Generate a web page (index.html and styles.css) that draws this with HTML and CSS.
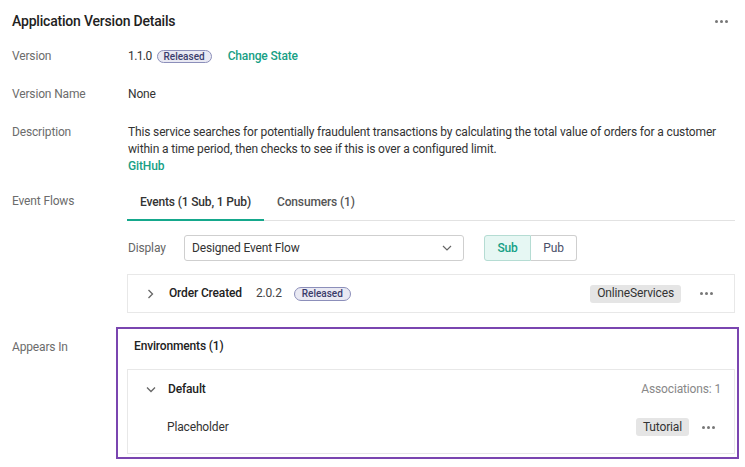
FILE: index.html
```html
<!DOCTYPE html>
<html>
<head>
<meta charset="utf-8">
<link rel="stylesheet" href="styles.css">
</head>
<body>
<div class="page">
  <header class="head">
    <h1 class="title">Application Version Details</h1>
    <span class="dots" aria-label="More"><i></i><i></i><i></i></span>
  </header>

  <div class="row">
    <div class="label">Version</div>
    <div class="value inline">
      <span class="ver">1.1.0</span>
      <span class="badge">Released</span>
      <a class="link change">Change State</a>
    </div>
  </div>

  <div class="row">
    <div class="label">Version Name</div>
    <div class="value">None</div>
  </div>

  <div class="row desc-row">
    <div class="label">Description</div>
    <div class="value">
      <p class="desc">This service searches for potentially fraudulent transactions by calculating the total value of orders for a customer within a time period, then checks to see if this is over a configured limit.</p>
      <a class="link">GitHub</a>
    </div>
  </div>

  <div class="row flows-row">
    <div class="label flows-label">Event Flows</div>
    <div class="value">
      <div class="tabs">
        <span class="tab active">Events (1 Sub, 1 Pub)</span>
        <span class="tab">Consumers (1)</span>
      </div>
      <div class="display">
        <span class="display-label">Display</span>
        <div class="select">
          <span>Designed Event Flow</span>
          <svg class="sel-chev" width="10" height="6" viewBox="0 0 10 6"><path d="M1 1l4 4 4-4" fill="none" stroke="#666" stroke-width="1.2"/></svg>
        </div>
        <div class="toggle">
          <span class="tg on">Sub</span>
          <span class="tg">Pub</span>
        </div>
      </div>
      <div class="card event">
        <svg class="chev" width="7" height="10" viewBox="0 0 7 10"><path d="M1.5 1l4 4-4 4" fill="none" stroke="#666" stroke-width="1.3"/></svg>
        <span class="ev-name">Order Created</span>
        <span class="ev-ver">2.0.2</span>
        <span class="badge">Released</span>
        <span class="spacer"></span>
        <span class="tag">OnlineServices</span>
        <span class="dots small"><i></i><i></i><i></i></span>
      </div>
    </div>
  </div>

  <div class="row appears-row">
    <div class="label appears-label">Appears In</div>
    <div class="highlight">
      <div class="env-title">Environments (1)</div>
      <div class="card env">
        <div class="env-head">
          <svg class="chev down" width="10" height="7" viewBox="0 0 10 7"><path d="M1 1.5l4 4 4-4" fill="none" stroke="#666" stroke-width="1.3"/></svg>
          <span class="env-name">Default</span>
          <span class="spacer"></span>
          <span class="assoc">Associations: 1</span>
        </div>
        <div class="env-item">
          <span>Placeholder</span>
          <span class="spacer"></span>
          <span class="tag">Tutorial</span>
          <span class="dots small"><i></i><i></i><i></i></span>
        </div>
      </div>
    </div>
  </div>
</div>
</body>
</html>
```
FILE: styles.css
```css
* { box-sizing: border-box; }
html, body { margin: 0; padding: 0; background: #fff; }
body {
  font-family: Roboto, "Liberation Sans", sans-serif;
  font-size: 12px;
  line-height: 17px;
  color: #333;
  letter-spacing: -0.15px;
}
.page { width: 745px; padding: 0 10px 0 12px; }

.head {
  display: flex;
  align-items: center;
  height: 48px;
  padding: 0 7px 6px 0;
}
.title {
  margin: 0;
  flex: 1;
  font-size: 14px;
  font-weight: 500;
  line-height: 20px;
  color: #222;
  letter-spacing: -0.2px;
}
.dots { display: inline-flex; gap: 2px; align-items: center; }
.dots i { width: 3px; height: 3px; border-radius: 50%; background: #777; display: block; }

.row {
  display: grid;
  grid-template-columns: 116px 1fr;
  margin-bottom: 21px;
}
.label { color: #6c6c6c; }
.value.inline { display: flex; align-items: center; }
.ver { letter-spacing: -0.6px; }
.value.inline .badge { margin-left: 5px; }
.badge {
  display: inline-flex;
  align-items: center;
  height: 13px;
  padding: 0 6px;
  border: 1px solid #8c8fba;
  border-radius: 7px;
  background: #e9e9f3;
  color: #3a3c6c;
  font-size: 10px;
  font-weight: 500;
  letter-spacing: 0;
  line-height: 11px;
}
.link { color: #17a085; font-weight: 500; cursor: pointer; }
.change { margin-left: 16px; }
.desc { margin: 0; }
.desc-row { margin-bottom: 9px; }

.flows-row { margin-bottom: 0; }
.flows-label { padding-top: 9px; }
.tabs {
  display: flex;
  height: 37px;
  border-bottom: 1px solid #e2e2e2;
  margin-left: -1px;
}
.tab {
  padding: 10px 13px 0;
  font-weight: 500;
  color: #555;
}
.tab.active { color: #333; border-bottom: 2px solid #15a88c; margin-bottom: -1px; }

.display {
  display: flex;
  align-items: center;
  margin-top: 14px;
  height: 26px;
}
.display-label { width: 56px; color: #666; }
.select {
  width: 280px;
  height: 26px;
  border: 1px solid #cfcfcf;
  border-radius: 3px;
  display: flex;
  align-items: center;
  padding: 0 11px 0 7px;
}
.select span { flex: 1; }
.toggle {
  display: flex;
  margin-left: 20px;
  height: 26px;
}
.tg {
  display: flex;
  align-items: center;
  justify-content: center;
  border: 1px solid #cfcfcf;
  color: #4a4f6a;
}
.tg.on {
  width: 47px;
  background: #e6f7f3;
  border-color: #b5dcd3;
  color: #14a085;
  font-weight: 500;
  border-radius: 3px 0 0 3px;
}
.tg:last-child { width: 46px; border-left: none; border-radius: 0 3px 3px 0; }

.card { border: 1px solid #e8e8e8; }
.event {
  margin: 13px 0 0 -1px;
  height: 39px;
  display: flex;
  align-items: center;
  padding: 0 21px 0 19px;
}
.chev { display: block; flex: none; }
.event .chev { margin-right: 15px; }
.ev-name { font-weight: 500; color: #222; }
.ev-ver { margin-left: 14px; color: #444; }
.event .badge { margin-left: 12px; padding: 0 7px; height: 14px; }
.spacer { flex: 1; }
.tag {
  display: inline-flex;
  align-items: center;
  height: 18px;
  padding: 0 7px;
  background: #e5e5e5;
  border-radius: 3px;
  color: #333;
}
.event .tag { margin-right: 19px; }

.appears-row { margin: 14px 0 0; }
.appears-label { padding-top: 11.5px; }
.highlight {
  margin-left: -12px;
  margin-right: -4px;
  border: 2px solid #7a45b0;
  padding: 9px 2px 3px 9px;
}
.env-title { font-weight: 500; color: #222; padding-left: 7px; height: 31px; }
.env-head {
  display: flex;
  align-items: center;
  height: 38px;
  padding: 0 13px 0 18px;
}
.env-head .chev { margin-right: 12px; }
.env-name { font-weight: 500; color: #222; }
.assoc { color: #888; }
.env-item {
  display: flex;
  align-items: center;
  height: 45px;
  padding: 0 19px 7px 39px;
}
.env-item .tag { margin-right: 13px; }
```
